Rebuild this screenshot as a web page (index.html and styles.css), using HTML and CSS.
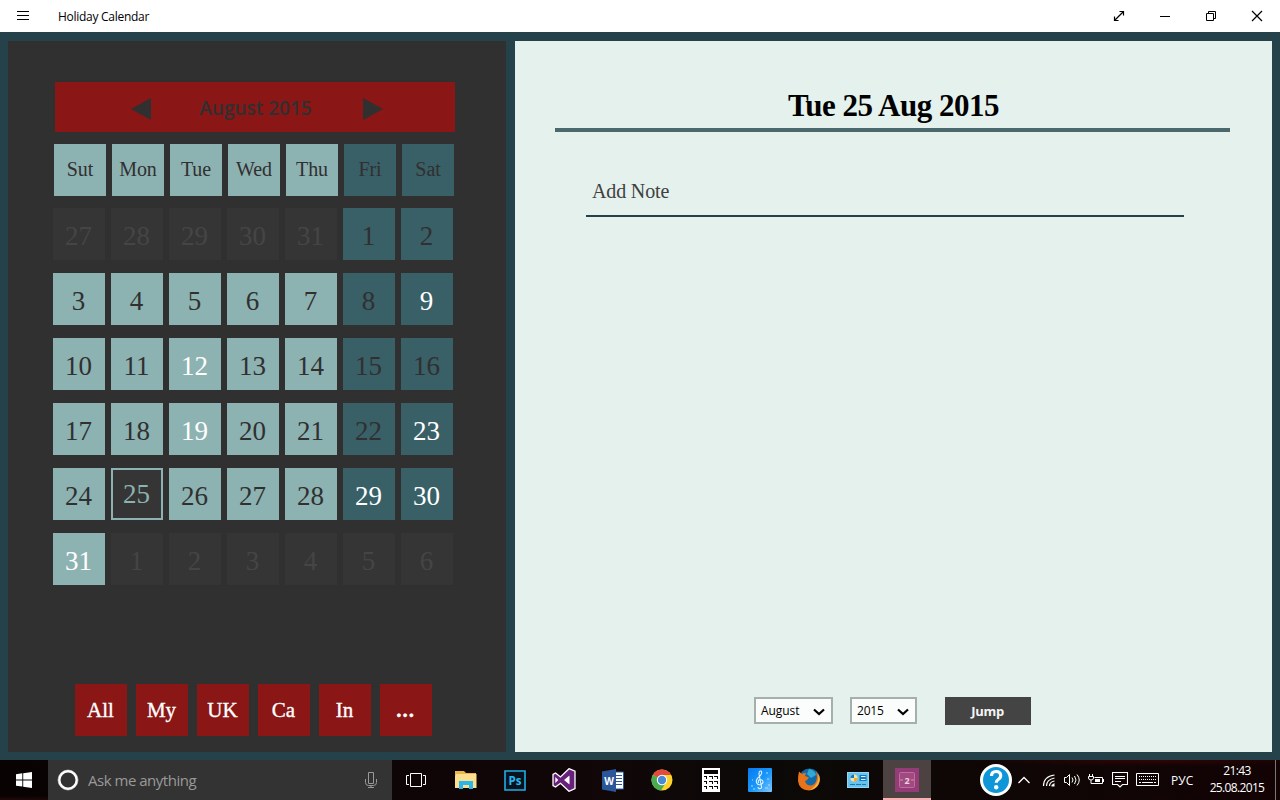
FILE: index.html
```html
<!DOCTYPE html>
<html lang="en">
<head>
<meta charset="utf-8">
<title>Holiday Calendar</title>
<link rel="stylesheet" href="styles.css">
</head>
<body>
<header class="titlebar">
  <svg class="menu" width="12" height="10" viewBox="0 0 12 10"><path d="M0 .5h12M0 4.500h12M0 8.500h12" stroke="#000"/></svg>
  <span class="app-name">Holiday Calendar</span>
  <div class="controls">
    <svg width="46" height="32" viewBox="0 0 46 32" fill="none" stroke="#000"><path d="M18.500 20.500l9-9M23.500 11.500h4v4M18.500 16.500v4h4" stroke-width="1.200"/></svg>
    <svg width="46" height="32" viewBox="0 0 46 32" fill="none" stroke="#000"><path d="M18 16.500h10"/></svg>
    <svg width="46" height="32" viewBox="0 0 46 32" fill="none" stroke="#000"><path d="M18.500 13.500h7v7h-7zM20.500 13.500v-2h7v7h-2"/></svg>
    <svg width="46" height="32" viewBox="0 0 46 32" fill="none" stroke="#000"><path d="M18 11l10 10M28 11l-10 10" stroke-width="1.200"/></svg>
  </div>
</header>

<main class="app">
  <section class="calendar">
    <div class="month-bar">
      <svg width="20" height="22" viewBox="0 0 20 22"><path d="M0 11L20 0v22z"/></svg>
      <span class="month-name">August 2015</span>
      <svg width="20" height="22" viewBox="0 0 20 22"><path d="M20 11L0 0v22z"/></svg>
    </div>
    <div class="weekdays">
      <span class="cell">Sut</span><span class="cell">Mon</span><span class="cell">Tue</span><span class="cell">Wed</span><span class="cell">Thu</span><span class="cell weekend">Fri</span><span class="cell weekend">Sat</span>
    </div>
    <div class="days">
      <span class="cell other">27</span><span class="cell other">28</span><span class="cell other">29</span><span class="cell other">30</span><span class="cell other">31</span><span class="cell weekend">1</span><span class="cell weekend">2</span>
      <span class="cell">3</span><span class="cell">4</span><span class="cell">5</span><span class="cell">6</span><span class="cell">7</span><span class="cell weekend">8</span><span class="cell weekend holiday">9</span>
      <span class="cell">10</span><span class="cell">11</span><span class="cell holiday">12</span><span class="cell">13</span><span class="cell">14</span><span class="cell weekend">15</span><span class="cell weekend">16</span>
      <span class="cell">17</span><span class="cell">18</span><span class="cell holiday">19</span><span class="cell">20</span><span class="cell">21</span><span class="cell weekend">22</span><span class="cell weekend holiday">23</span>
      <span class="cell">24</span><span class="cell today">25</span><span class="cell">26</span><span class="cell">27</span><span class="cell">28</span><span class="cell weekend holiday">29</span><span class="cell weekend holiday">30</span>
      <span class="cell holiday">31</span><span class="cell other">1</span><span class="cell other">2</span><span class="cell other">3</span><span class="cell other">4</span><span class="cell other">5</span><span class="cell other">6</span>
    </div>
    <div class="filters">
      <span class="filter">All</span><span class="filter">My</span><span class="filter">UK</span><span class="filter">Ca</span><span class="filter">In</span><span class="filter more">...</span>
    </div>
  </section>

  <section class="notes">
    <h1 class="date"><span>Tue 25 Aug 2015</span></h1>
    <div class="note-input">Add Note</div>
    <div class="jump-row">
      <div class="select month"><span>August</span><svg width="12" height="8" viewBox="0 0 12 8"><path d="M1 1.500l5 4.500 5-4.500"/></svg></div>
      <div class="select year"><span>2015</span><svg width="12" height="8" viewBox="0 0 12 8"><path d="M1 1.500l5 4.500 5-4.500"/></svg></div>
      <div class="jump">Jump</div>
    </div>
  </section>
</main>

<footer class="taskbar">
  <div class="start"><svg width="16" height="16" viewBox="0 0 16 16" fill="#fff"><path d="M0 2.200L6.300 1.300V7.400H0zM7.200 1.200L16 0v7.400H7.200zM0 8.400h6.300v6.200L0 13.700zM7.200 8.400H16V16L7.200 14.700z"/></svg></div>
  <div class="search">
    <svg width="22" height="22" viewBox="0 0 22 22" fill="none"><circle cx="11" cy="11" r="10" stroke="#999"/><circle cx="11" cy="11" r="8.700" stroke="#fff" stroke-width="2.400"/></svg>
    <span class="search-text">Ask me anything</span>
    <svg class="mic" width="12" height="17" viewBox="0 0 12 17" fill="none" stroke="#999"><path d="M3.500.5h5v11h-5zM.5 7v3.500q0 3 3 3h5q3 0 3-3V7M6 13.500v2M3 15.500h6"/></svg>
  </div>
  <nav class="apps">
    <div class="task view"><svg width="20" height="14" viewBox="0 0 20 14" fill="none" stroke="#fff"><path d="M4.500.5h11v13h-11zM3 2.500H.5v9H3M17 2.500h2.500v9H17"/></svg></div>
    <div class="task"><svg width="22" height="18" viewBox="0 0 22 18"><path d="M0 0h9l2 2h10v15H0z" fill="#e8b84a"/><path d="M1 3h20.500v14H0V6z" fill="#fbdf8c"/><path d="M4 18v-8h14v8h-4v-4H8v4z" fill="#29b6ee"/></svg></div>
    <div class="task"><svg width="22" height="21" viewBox="0 0 22 21"><path d="M1 1h20v19H1z" fill="#07131f" stroke="#20aee5" stroke-width="1.600"/><text x="11" y="14.500" text-anchor="middle" class="ps">Ps</text></svg></div>
    <div class="task"><svg width="24" height="24" viewBox="0 0 24 24"><path d="M17 .7l6 2.400v17.500l-6 2.700-8.500-8L3.500 19 1 17.700V6.300L3.500 5l5 4z" fill="#68217a" stroke="#fff" stroke-width="1.300"/><path d="M17.500 7.500v9L12 12zM3.300 9v6l3-3z" fill="#fff"/></svg></div>
    <div class="task"><svg width="22" height="23" viewBox="0 0 22 23"><path d="M12 3h9.500v17H12z" fill="#fff" stroke="#2b579a"/><path d="M14 6.500h6M14 9.500h6M14 12.500h6M14 15.500h6" stroke="#2b579a"/><path d="M0 2.500L14 0v23L0 20.500z" fill="#2b579a"/><text x="7" y="15.500" text-anchor="middle" class="word">W</text></svg></div>
    <div class="task"><svg width="22" height="22" viewBox="0 0 22 22"><circle cx="11" cy="11" r="10.500" fill="#fdd32b"/><path d="M11 11L1.900 5.700A10.500 10.500 0 0 0 10 21.500L15 13.500z" fill="#4bab51"/><path d="M11 11L1.900 5.700A10.500 10.500 0 0 1 20.300 6H11z" fill="#e04a3f"/><circle cx="11" cy="11" r="5.200" fill="#fff"/><circle cx="11" cy="11" r="4.200" fill="#4a8ad4"/></svg></div>
    <div class="task"><svg width="18" height="24" viewBox="0 0 18 24"><path d="M0 0h18v24H0z" fill="#fff"/><path d="M2 2h14v4H2zM2 8h3v3H4V9H2zM7 8h4v3h-1V9H7zM12 8h4v3h-1V9h-3zM2 13h3v3H4v-2H2zM7 13h4v3h-1v-2H7zM12 13h4v3h-1v-2h-3zM2 18h3v3H4v-2H2zM7 18h4v3h-1v-2H7zM12 18h4v3h-1v-2h-3z" fill="#0c0404"/></svg></div>
    <div class="task"><svg width="24" height="24" viewBox="0 0 24 24"><defs><linearGradient id="sky" x2="1" y2="1"><stop stop-color="#0779ef"/><stop offset=".55" stop-color="#1b98fa"/><stop offset="1" stop-color="#83c9ff"/></linearGradient></defs><rect width="24" height="24" rx="1" fill="url(#sky)"/><path d="M10 19q0 2 2.500 1.500 1.500-.5 1-2L11 6q0-3.500 2-3 2 2-1.500 5.500-4 3-3 6 1 3 4.500 2 3-1.500 1.500-4-2-2-4 0-.8 1.500.5 2.500" fill="none" stroke="#dff1ff" stroke-width="1.100"/><path d="M3 18h2M5 21h2M18 5h2M20 17h2M17 20h3M4 12h1M19 11h2" stroke="#a8dcff"/></svg></div>
    <div class="task"><svg width="24" height="24" viewBox="0 0 24 24"><circle cx="12.500" cy="11" r="10.500" fill="#126aa8"/><path d="M12 1q6 1 7 6l-5 3-4-4z" fill="#32a8d4"/><path d="M2 3.500L5 6q2-1.500 4-1l-1 3 4 1.500-2 2.500-2 1q1 4 5 4.500 4 0 6-4 2-5-.5-10 4 3 4.500 8-1 10-11 11Q2 22 1 13 1 7 2 3.500z" fill="#e87319"/><path d="M21.500 6q1.500 3 1 7-2 8-10 9.500 6-4 8-9 1-4 1-7.500z" fill="#f8b536"/></svg></div>
    <div class="task"><svg width="22" height="16" viewBox="0 0 22 16"><rect x=".5" y=".5" width="21" height="15" fill="#67c2ee" stroke="#94d7f5"/><circle cx="7" cy="6" r="3.500" fill="#f3e2a4"/><path d="M7 6V2.500A3.500 3.500 0 0 0 3.500 6z" fill="#1679b8"/><path d="M7 6h3.500A3.500 3.500 0 0 1 7 9.500z" fill="#f3a62c"/><path d="M12.500 3h7v6h-7z" fill="#1679b8"/><path d="M14 4.500h4.500M14 7.500h4.500" stroke="#d9f2ff"/><path d="M3 12.500h16" stroke="#1679b8" stroke-dasharray="5 1"/></svg></div>
    <div class="task active"><svg width="24" height="24" viewBox="0 0 24 24"><path d="M0 0h24v24H0z" fill="#943b78"/><rect x="4.500" y="4.500" width="15" height="15" rx="1" fill="#a14a82" stroke="#b9709b"/><path d="M5 12h3M16 12h3" stroke="#cf8eae"/><text x="12" y="15.500" text-anchor="middle" class="tile">2</text></svg></div>
  </nav>
  <div class="tray">
    <svg class="help" width="32" height="32" viewBox="0 0 32 32"><circle cx="16" cy="16" r="14.500" fill="#0e96d8" stroke="#fff" stroke-width="3"/><path d="M11.500 12q0-4.500 4.500-4.500t4.700 4q0 2.500-2.500 4-2 1.300-2 3.200" fill="none" stroke="#fff" stroke-width="3.200"/><circle cx="16.200" cy="23.200" r="2.200" fill="#fff"/></svg>
    <svg class="chevron" width="12" height="8" viewBox="0 0 12 8"><path d="M.5 7L6 1.500 11.500 7" stroke-width="1.300"/></svg>
    <svg class="wifi" width="14" height="14" viewBox="0 0 14 14"><path d="M1.500 13Q1.500 3.500 12.500 2M4.500 13Q4.500 6.500 12.500 5M7.500 13Q7.500 9 12.500 8" stroke-width="1.200"/><path d="M9.500 13.500v-1.500l3-2v3.500z" fill="#fff" stroke="none"/></svg>
    <svg class="volume" width="16" height="14" viewBox="0 0 16 14"><path d="M.5 4.500h2l3-3v11l-3-3h-2zM8 4.500q2 2.500 0 5M10.500 3q3 4 0 8M13 1.500q4.500 5.500 0 11"/></svg>
    <svg class="battery" width="16" height="12" viewBox="0 0 16 12"><path d="M6.500 3.500h8v6h-9.500M15.500 5v3M1.500 0v2M4.500 0v2M.5 2.500h5v1.500q0 2-2.500 2t-2.500-2zM3 6v3.500h2"/><path d="M7 5h5v3H7z" fill="#fff" stroke="none"/></svg>
    <svg class="action" width="16" height="16" viewBox="0 0 16 16"><path d="M.5.5h15v12h-5L8 15l-2.500-2.500h-5zM3 4.500h10M3 6.500h10M3 9.500h6" stroke-width="1.100"/></svg>
    <svg class="keyboard" width="23" height="14" viewBox="0 0 23 14"><path d="M.5.5h22v12H.5z"/><path d="M3 3.500h17M3 6.500h17" stroke-dasharray="1 1"/><path d="M3 9.500h2M6 9.500h11M18 9.500h2"/></svg>
    <span class="lang">РУС</span>
    <div class="clock"><span>21:43</span><span>25.08.2015</span></div>
    <div class="show-desktop"></div>
  </div>
</footer>
</body>
</html>
```
FILE: styles.css
```css
* { box-sizing: border-box; }
body {
  margin: 0; width: 1280px; height: 800px; overflow: hidden;
  display: flex; flex-direction: column;
  font-family: "Open Sans", "Noto Sans", sans-serif; color: #000;
}
svg { display: block; flex: none; }
span { white-space: nowrap; }

.titlebar { height: 32px; flex: none; display: flex; align-items: center; background: #fff; padding-left: 17px; }
.app-name { margin-left: 29px; font-size: 12px; letter-spacing: -.28px; }
.controls { display: flex; margin-left: auto; }

.app { height: 728px; flex: none; display: flex; gap: 9px; padding: 9px 8px 8px; background: #25414a; }

.calendar { width: 498px; background: #303030; padding: 41px 0 16px 45px; display: flex; flex-direction: column; font-family: "Liberation Serif", serif; }
.month-bar { width: 400px; height: 50px; margin-left: 2px; background: #8a1616; display: flex; align-items: center; padding: 3px 72px 0 76px; justify-content: space-between; fill: #303030; }
.month-name { font: 600 19px/24px "Open Sans", sans-serif; color: #303030; margin: -2px 3px 0 0; }
.month-bar svg { margin-top: 1px; }
.weekdays { display: grid; grid-template-columns: repeat(7, 52px); gap: 6px; margin: 12px 0 0 1px; font-size: 20px; }
.weekdays .cell { padding-bottom: 1px; letter-spacing: -.1px; }
.days { display: grid; grid-template-columns: repeat(7, 52px); gap: 13px 6px; margin-top: 12px; font-size: 27px; }
.cell { height: 52px; display: flex; align-items: center; justify-content: center; background: #8db2b2; color: #303030; }
.days .cell { padding-top: 5px; padding-right: 1px; }
.cell.weekend { background: #395f67; }
.cell.holiday { color: #fff; }
.cell.other { background: #353535; color: #454545; }
.days .cell.today { background: #353535; border: 2px solid #8db2b2; color: #8db2b2; padding-top: 1px; }
.filters { display: flex; gap: 9px; margin: auto 0 0 22px; font-size: 21px; color: #fff; -webkit-text-stroke: .35px #fff; }
.filter { width: 52px; height: 52px; background: #8a1616; display: flex; align-items: center; justify-content: center; padding: 1px 1px 0 0; }
.more { font-weight: bold; letter-spacing: 1px; }

.notes { flex: 1; background: #e5f1ed; padding: 41px 42px 27px 40px; display: flex; flex-direction: column; font-family: "Liberation Serif", serif; }
.date { margin: 0; height: 50px; border-bottom: 4px solid #4b696d; font-size: 31px; line-height: 47px; text-align: center; letter-spacing: -.5px; padding-left: 2px; }
.note-input { margin: 36px 46px 0 31px; height: 49px; border-bottom: 2px solid #25414a; font-size: 20px; line-height: 47px; letter-spacing: -.15px; padding-left: 6px; color: #404040; }
.jump-row { display: flex; margin: auto 0 0 199px; font-family: "Open Sans", sans-serif; font-size: 12px; align-items: flex-start; }
.select { height: 27px; border: 2px solid #a5b0ad; background: #fbfdfc; display: flex; align-items: center; justify-content: space-between; padding: 0 6px 0 5px; }
.select svg { fill: none; stroke: #000; stroke-width: 2.2; margin-top: 3px; }
.month { width: 79px; }
.year { width: 67px; margin-left: 17px; }
.month span { letter-spacing: -.05px; }
.year span { letter-spacing: -.2px; }
.jump { width: 86px; height: 28px; margin-left: 28px; background: #444; color: #f4f4f4; font-size: 13px; font-weight: bold; letter-spacing: -.3px; line-height: 28px; text-align: center; padding-right: 1px; }

.taskbar { height: 40px; flex: none; display: flex; color: #fff; background: radial-gradient(ellipse at 0 100%, #240808, transparent 130px), radial-gradient(ellipse at 1150px 0, #310406, transparent 180px), linear-gradient(90deg, #080203, #110607 45%, #0b0907 60%, #130304); }
.start { width: 48px; display: flex; align-items: center; justify-content: center; }
.search { width: 344px; background: #333; display: flex; align-items: center; padding: 0 15px 0 9px; }
.search-text { font-size: 15px; letter-spacing: -.48px; color: #999; margin-left: 9px; }
.mic { margin-left: auto; }
.apps { display: flex; gap: 1px; }
.task { width: 48px; height: 40px; display: flex; align-items: center; justify-content: center; }
.view { margin-right: 1px; }
.active { background: #4d4242; border-bottom: 2px solid #f9b0b3; padding-top: 1px; }
.ps { font: bold 11.5px "Open Sans", sans-serif; fill: #29b9ef; }
.word { font: bold 10px "Open Sans", sans-serif; fill: #fff; }
.tile { font: bold 9px "Open Sans", sans-serif; fill: #f0d0df; }
.tray { display: flex; align-items: center; margin-left: 49px; fill: none; stroke: #fff; }
.help { stroke: none; }
.chevron { margin-left: 6px; }
.wifi { margin-left: 12px; }
.volume, .battery, .action, .keyboard { margin-left: 8px; }
.lang { margin-left: 12px; width: 23px; font-size: 12px; }
.clock { margin-left: 10px; width: 66px; display: flex; flex-direction: column; align-items: center; font-size: 12px; line-height: 17px; letter-spacing: -.65px; padding-bottom: 2px; }
.show-desktop { width: 1px; height: 40px; margin-left: 5px; background: #777; }
```
